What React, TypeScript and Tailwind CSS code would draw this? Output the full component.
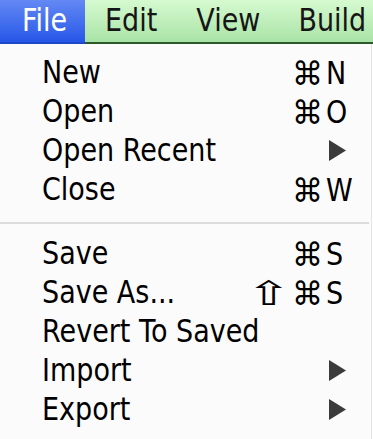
type Item = { label: string; shift?: boolean; keyChar?: string; sub?: boolean };

const top: Item[] = [
  { label: "New", keyChar: "N" },
  { label: "Open", keyChar: "O" },
  { label: "Open Recent", sub: true },
  { label: "Close", keyChar: "W" },
];

const bottom: Item[] = [
  { label: "Save", keyChar: "S" },
  { label: "Save As...", shift: true, keyChar: "S" },
  { label: "Revert To Saved" },
  { label: "Import", sub: true },
  { label: "Export", sub: true },
];

// the reference glyphs are a bit taller than DejaVu's, so stretch text vertically
const tall = "inline-block scale-y-[1.15] origin-[50%_72%]";

function Row({ item }: { item: Item }) {
  return (
    <div className="flex items-center h-[39px] leading-[39px] pl-[42px] pr-[23px] text-black">
      <span className="flex-1 whitespace-nowrap">
        <span className={tall}>{item.label}</span>
      </span>
      {item.keyChar && (
        <span className="flex items-center leading-none shrink-0">
          {item.shift && (
            <span className="inline-block scale-x-[1.8] scale-y-[1.12] text-[30px] mr-[11px]">⇧</span>
          )}
          <span className="inline-block text-[31px] scale-y-[1.05]">⌘</span>
          <span className={`${tall} w-[22px] ml-[3px] text-left`}>{item.keyChar}</span>
        </span>
      )}
      {item.sub && (
        <svg width="17" height="21" viewBox="0 0 17 21" className="shrink-0 mb-[2px] mr-[2px]">
          <polygon points="0,0 17,10.5 0,21" fill="#3b3b3b" />
        </svg>
      )}
    </div>
  );
}

export default function App() {
  return (
    <div className="w-[373px] h-[439px] overflow-hidden bg-white font-['DejaVu_Sans',sans-serif] text-[27px]">
      <div className="flex h-[44px] bg-gradient-to-b from-[#d6fad0] to-[#a9e3a6] border-b-2 border-[#2c5a2c]">
        <div className="w-[85px] -mb-[2px] flex items-center justify-center bg-gradient-to-b from-[#6488f4] to-[#2656e8] border-b-2 border-[#1c47c8] text-white pl-[4px] pt-[3px]">
          <span className={tall}>File</span>
        </div>
        <div className="flex items-center text-[#161616] pt-[3px]">
          <span className={`${tall} ml-[20px]`}>Edit</span>
          <span className={`${tall} ml-[39px]`}>View</span>
          <span className={`${tall} ml-[38px]`}>Build</span>
        </div>
      </div>
      <div className="bg-[#fbfbfb] border-r border-[#e4e4e4] w-[372px] h-[395px] pt-[10px]">
        {top.map((it) => (
          <Row key={it.label} item={it} />
        ))}
        <div className="mt-[12px] mb-[11px] h-[2px] bg-[#dcdcdc] mr-[2px]" />
        {bottom.map((it) => (
          <Row key={it.label} item={it} />
        ))}
      </div>
    </div>
  );
}
